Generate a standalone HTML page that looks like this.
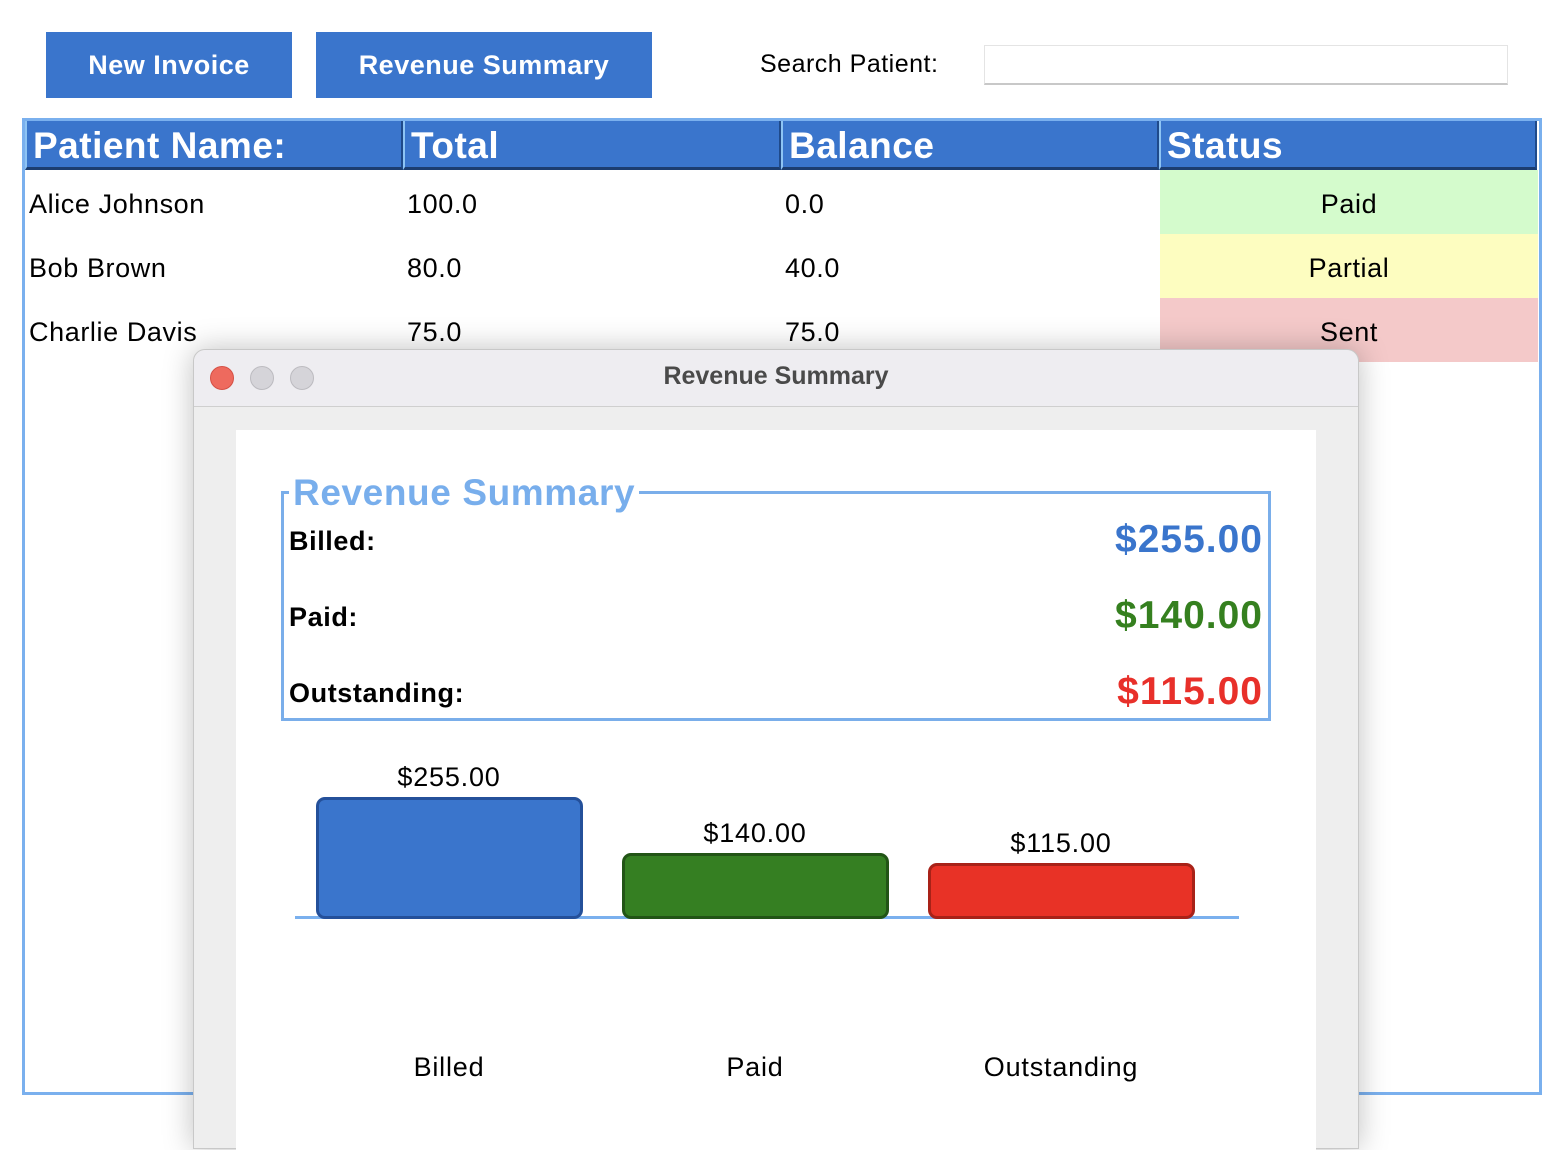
<!DOCTYPE html>
<html><head><meta charset="utf-8"><style>
*{margin:0;padding:0;box-sizing:border-box}
body{width:1562px;height:1126px;background:#fff;position:relative;overflow:hidden;font-family:"Liberation Sans","DejaVu Sans",sans-serif;color:#000}
.a{position:absolute;white-space:nowrap}
.btn{background:#3a75cc;color:#fff;font-weight:bold;font-size:27px;display:flex;align-items:center;justify-content:center;letter-spacing:0.5px}
.th{position:absolute;top:121px;height:49px;background:#3a75cc;color:#fff;font-weight:bold;font-size:37px;line-height:49px;padding-left:6px;border-left:2px solid #8ec4f4;border-right:2px solid #1f4a8a;border-bottom:3px solid #1c3d70;letter-spacing:0.5px}
.td{position:absolute;font-size:27px;height:64px;line-height:68px;letter-spacing:0.6px}
.st{text-align:center;left:1160px;width:378px}
.lbl{font-weight:bold;font-size:27px;letter-spacing:0.6px}
.val{font-weight:bold;font-size:39px;right:299px;letter-spacing:1px}
.bar{position:absolute;border-radius:9px;border:3px solid}
.cl{font-size:27px;text-align:center;width:300px;letter-spacing:0.8px}
</style></head><body>
<div class="a btn" style="left:46px;top:32px;width:246px;height:66px">New Invoice</div>
<div class="a btn" style="left:316px;top:32px;width:336px;height:66px">Revenue Summary</div>
<div class="a" style="left:760px;top:50px;font-size:25px;letter-spacing:0.5px">Search Patient:</div>
<div class="a" style="left:984px;top:45px;width:524px;height:40px;border:1px solid #e4e4e4;border-bottom:2px solid #c8c8c8;background:#fff"></div>

<div class="a" style="left:22px;top:118px;width:1520px;height:977px;border:3px solid #7ab0ee"></div>
<div class="th" style="left:25px;width:378px">Patient Name:</div>
<div class="th" style="left:403px;width:378px">Total</div>
<div class="th" style="left:781px;width:378px">Balance</div>
<div class="th" style="left:1159px;width:378px">Status</div>

<div class="td" style="left:29px;top:170px">Alice Johnson</div>
<div class="td" style="left:407px;top:170px">100.0</div>
<div class="td" style="left:785px;top:170px">0.0</div>
<div class="td st" style="top:170px;background:#d4fbcc">Paid</div>
<div class="td" style="left:29px;top:234px">Bob Brown</div>
<div class="td" style="left:407px;top:234px">80.0</div>
<div class="td" style="left:785px;top:234px">40.0</div>
<div class="td st" style="top:234px;background:#fdfdc0">Partial</div>
<div class="td" style="left:29px;top:298px">Charlie Davis</div>
<div class="td" style="left:407px;top:298px">75.0</div>
<div class="td" style="left:785px;top:298px">75.0</div>
<div class="td st" style="top:298px;background:#f4c9c9">Sent</div>

<div class="a" style="left:193px;top:349px;width:1166px;height:800px;background:#eeeeee;border:1px solid #c8c8c8;border-radius:12px 12px 0 0;box-shadow:0 0 30px rgba(0,0,0,0.25)"></div>
<div class="a" style="left:194px;top:350px;width:1164px;height:57px;background:#eeedf1;border-bottom:1px solid #cfcfcf;border-radius:12px 12px 0 0"></div>
<div class="a" style="left:210px;top:366px;width:24px;height:24px;border-radius:50%;background:#ee6a5e;border:1px solid #d55045"></div>
<div class="a" style="left:250px;top:366px;width:24px;height:24px;border-radius:50%;background:#d5d4d9;border:1px solid #bcbbc0"></div>
<div class="a" style="left:290px;top:366px;width:24px;height:24px;border-radius:50%;background:#d5d4d9;border:1px solid #bcbbc0"></div>
<div class="a" style="left:194px;width:1164px;top:362px;text-align:center;font-weight:bold;font-size:25px;color:#4a4a4a">Revenue Summary</div>
<div class="a" style="left:236px;top:430px;width:1080px;height:720px;background:#fff"></div>

<div class="a" style="left:281px;top:491px;width:990px;height:230px;border:3px solid #7aaeea"></div>
<div class="a" style="left:289px;top:472px;padding:0 4px;background:#fff;font-weight:bold;font-size:37px;color:#78aeec;line-height:42px;letter-spacing:0.6px">Revenue Summary</div>
<div class="a lbl" style="left:289px;top:526px">Billed:</div>
<div class="a lbl" style="left:289px;top:602px">Paid:</div>
<div class="a lbl" style="left:289px;top:678px">Outstanding:</div>
<div class="a val" style="top:518px;color:#3a75cc">$255.00</div>
<div class="a val" style="top:594px;color:#35801f">$140.00</div>
<div class="a val" style="top:670px;color:#e8302a">$115.00</div>

<div class="a" style="left:295px;top:916px;width:944px;height:3px;background:#7ab0ee"></div>
<div class="bar" style="left:316px;top:797px;width:267px;height:122px;background:#3a75cc;border-color:#24509a"></div>
<div class="bar" style="left:622px;top:853px;width:267px;height:66px;background:#357f22;border-color:#225516"></div>
<div class="bar" style="left:928px;top:863px;width:267px;height:56px;background:#e83226;border-color:#a82218"></div>
<div class="a cl" style="left:299px;top:762px">$255.00</div>
<div class="a cl" style="left:605px;top:818px">$140.00</div>
<div class="a cl" style="left:911px;top:828px">$115.00</div>
<div class="a cl" style="left:299px;top:1052px">Billed</div>
<div class="a cl" style="left:605px;top:1052px">Paid</div>
<div class="a cl" style="left:911px;top:1052px">Outstanding</div>
</body></html>
